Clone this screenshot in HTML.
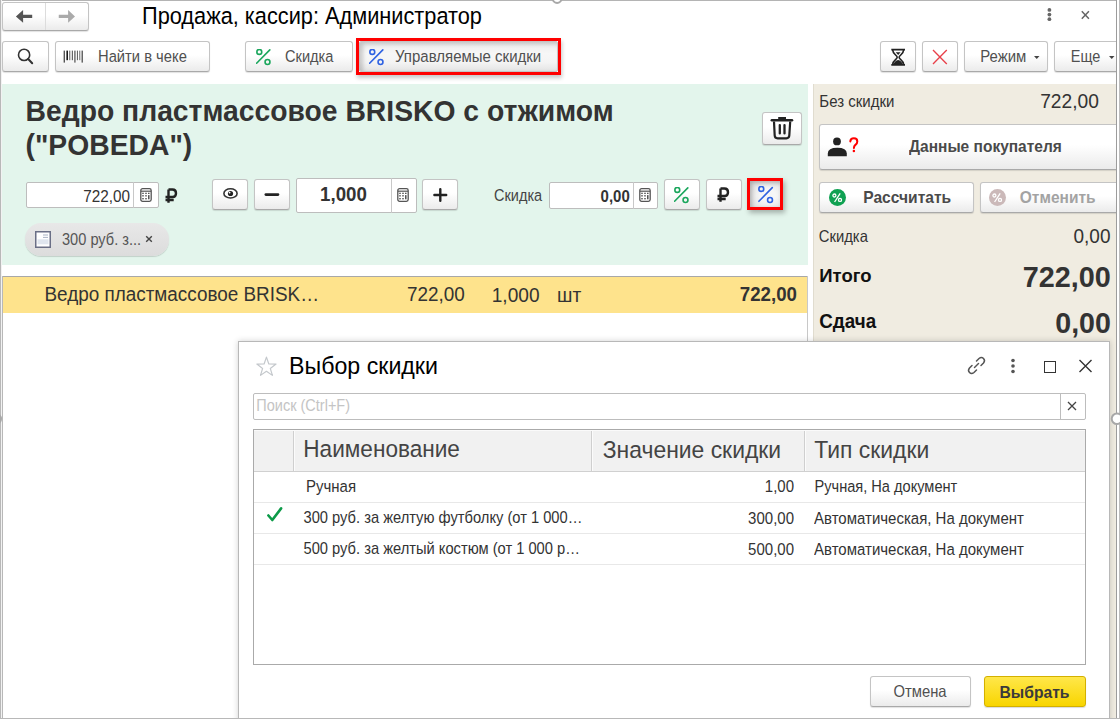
<!DOCTYPE html>
<html><head><meta charset="utf-8">
<style>
html,body{margin:0;padding:0;width:1120px;height:719px;overflow:hidden;background:#fff;position:relative;font-family:"Liberation Sans",sans-serif;}
.t{position:absolute;white-space:nowrap;}
</style></head><body>

<div style="position:absolute;left:0px;top:0px;width:1120px;height:1px;box-sizing:border-box;background:#b4b4b4;"></div>
<div style="position:absolute;left:0px;top:0px;width:1px;height:719px;box-sizing:border-box;background:#b8b8b8;"></div>
<div style="position:absolute;left:1px;top:0px;width:1px;height:719px;box-sizing:border-box;background:#f2f2f2;"></div>
<div style="position:absolute;left:1116px;top:0px;width:1px;height:719px;box-sizing:border-box;background:#9c9c9c;"></div>
<div style="position:absolute;left:1119px;top:0px;width:1px;height:719px;box-sizing:border-box;background:#bdbdbd;"></div>
<div style="position:absolute;left:0px;top:718px;width:1120px;height:1px;box-sizing:border-box;background:#b8b8b8;"></div>
<div style="position:absolute;left:2px;top:2px;width:87px;height:29px;box-sizing:border-box;border:1px solid #c4c4c4;border-bottom-color:#a9a9a9;border-radius:3px;background:linear-gradient(#ffffff 0%,#ffffff 45%,#ebebeb 100%);box-shadow:0 1px 1px rgba(0,0,0,0.12);"></div>
<div style="position:absolute;left:45px;top:3px;width:1px;height:27px;box-sizing:border-box;background:#dcdcdc;"></div>
<svg style="position:absolute;left:15px;top:9px" width="18" height="15" viewBox="0 0 18 15"><path d="M0.9 7.4 L8.1 1 V5.7 H17.2 V9.1 H8.1 V13.8 Z" fill="#555"/></svg>
<svg style="position:absolute;left:58px;top:9px" width="18" height="15" viewBox="0 0 18 15"><path d="M17 7.4 L10.1 1 V5.7 H0.75 V9.1 H10.1 V13.8 Z" fill="#aaa"/></svg>
<div class="t" style="left:142px;top:5.79px;font-size:21.75px;line-height:21.75px;font-weight:400;color:#000;transform:scaleY(1.08);transform-origin:0 18.41px;">Продажа, кассир: Администратор</div>
<svg style="position:absolute;left:1046px;top:7px" width="7" height="15" viewBox="0 0 7 15"><circle cx="3.4" cy="2.9" r="1.9" fill="#666"/><circle cx="3.4" cy="7.6" r="1.9" fill="#666"/><circle cx="3.4" cy="12.2" r="1.9" fill="#666"/></svg>
<svg style="position:absolute;left:1080px;top:10px" width="11" height="10" viewBox="0 0 11 10"><path d="M1.8 1.3 L8.9 8.7 M8.9 1.3 L1.8 8.7" stroke="#666" stroke-width="1.5"/></svg>
<div style="position:absolute;left:2px;top:41px;width:47px;height:31px;box-sizing:border-box;border:1px solid #c4c4c4;border-bottom-color:#a9a9a9;border-radius:3px;background:linear-gradient(#ffffff 0%,#ffffff 45%,#ebebeb 100%);box-shadow:0 1px 1px rgba(0,0,0,0.12);"></div>
<svg style="position:absolute;left:16px;top:48px" width="18" height="18" viewBox="0 0 18 18"><circle cx="8.1" cy="6.9" r="5.6" fill="none" stroke="#333" stroke-width="1.6"/><path d="M12.2 11 L16.2 15.3" stroke="#333" stroke-width="2" stroke-linecap="round"/></svg>
<div style="position:absolute;left:55px;top:41px;width:155px;height:31px;box-sizing:border-box;border:1px solid #c4c4c4;border-bottom-color:#a9a9a9;border-radius:3px;background:linear-gradient(#ffffff 0%,#ffffff 45%,#ebebeb 100%);box-shadow:0 1px 1px rgba(0,0,0,0.12);"></div>
<svg style="position:absolute;left:63px;top:50px" width="21" height="14" viewBox="0 0 21 14"><g><rect x="0.6" y="0.6" width="1.4" height="12" fill="#555"/><rect x="3.4" y="0.6" width="1.6" height="9.6" fill="#1a1a1a"/><rect x="6" y="0.6" width="1.4" height="9.6" fill="#888"/><rect x="8.8" y="0.6" width="1.1" height="9.6" fill="#555"/><rect x="11.2" y="0.6" width="1.4" height="12" fill="#666"/><rect x="13.9" y="0.6" width="1.1" height="9.6" fill="#666"/><rect x="16.2" y="0.6" width="1.1" height="9.6" fill="#777"/><rect x="18.5" y="0.6" width="1.5" height="12" fill="#666"/></g></svg>
<div class="t" style="left:98px;top:49.51px;font-size:14.75px;line-height:14.75px;font-weight:400;color:#505050;transform:scaleY(1.1);transform-origin:0 12.49px;">Найти в чеке</div>
<div style="position:absolute;left:245px;top:41px;width:108px;height:31px;box-sizing:border-box;border:1px solid #c4c4c4;border-bottom-color:#a9a9a9;border-radius:3px;background:linear-gradient(#ffffff 0%,#ffffff 45%,#ebebeb 100%);box-shadow:0 1px 1px rgba(0,0,0,0.12);"></div>
<svg style="position:absolute;left:256px;top:49px" width="16" height="17" viewBox="0 0 16 17"><circle cx="3.3" cy="2.9" r="2.45" fill="none" stroke="#1aa65c" stroke-width="1.6"/><circle cx="11.5" cy="13" r="2.45" fill="none" stroke="#1aa65c" stroke-width="1.6"/><path d="M0.6 14.2 L13.8 0.9" stroke="#1aa65c" stroke-width="1.6" stroke-linecap="round"/></svg>
<div class="t" style="left:285px;top:49.64px;font-size:14.6px;line-height:14.6px;font-weight:400;color:#505050;transform:scaleY(1.1);transform-origin:0 12.36px;">Скидка</div>
<div style="position:absolute;left:356px;top:38px;width:205px;height:37px;box-sizing:border-box;border:3px solid #ff0000;box-shadow:1px 3px 4px rgba(0,0,0,0.22);"></div>
<div style="position:absolute;left:359px;top:41px;width:199px;height:31px;box-sizing:border-box;border:1px solid #c4c4c4;border-radius:2px;background:linear-gradient(#ececec,#f7f7f7 40%,#f4f4f4 70%,#e4e4e4);box-shadow:inset 3px 2px 4px rgba(0,0,0,0.18);"></div>
<svg style="position:absolute;left:369px;top:49px" width="16" height="17" viewBox="0 0 16 17"><circle cx="3.3" cy="2.9" r="2.45" fill="none" stroke="#2e62e2" stroke-width="1.6"/><circle cx="11.5" cy="13" r="2.45" fill="none" stroke="#2e62e2" stroke-width="1.6"/><path d="M0.6 14.2 L13.8 0.9" stroke="#2e62e2" stroke-width="1.6" stroke-linecap="round"/></svg>
<div class="t" style="left:395px;top:49.30px;font-size:15px;line-height:15px;font-weight:400;color:#505050;transform:scaleY(1.1);transform-origin:0 12.70px;">Управляемые скидки</div>
<div style="position:absolute;left:880px;top:41px;width:36px;height:31px;box-sizing:border-box;border:1px solid #c4c4c4;border-bottom-color:#a9a9a9;border-radius:3px;background:linear-gradient(#ffffff 0%,#ffffff 45%,#ebebeb 100%);box-shadow:0 1px 1px rgba(0,0,0,0.12);"></div>
<svg style="position:absolute;left:890px;top:48px" width="16" height="19" viewBox="0 0 16 19"><path d="M1.3 1.6 H15 M1.3 16.8 H15" stroke="#222" stroke-width="1.8"/><path d="M2.7 2 C2.7 6 7.2 7.4 7.2 9.3 C7.2 11.2 2.7 12.5 2.7 16.3 M13.6 2 C13.6 6 9.1 7.4 9.1 9.3 C9.1 11.2 13.6 12.5 13.6 16.3" fill="none" stroke="#222" stroke-width="1.6"/><path d="M5.7 4.2 H10.6 L8.15 6.9 Z M3.4 16.2 Q4.8 12.6 8.15 11.9 Q11.5 12.6 12.9 16.2 Z" fill="#222"/></svg>
<div style="position:absolute;left:922px;top:41px;width:36px;height:31px;box-sizing:border-box;border:1px solid #c4c4c4;border-bottom-color:#a9a9a9;border-radius:3px;background:linear-gradient(#ffffff 0%,#ffffff 45%,#ebebeb 100%);box-shadow:0 1px 1px rgba(0,0,0,0.12);"></div>
<svg style="position:absolute;left:931px;top:49px" width="18" height="16" viewBox="0 0 18 16"><path d="M2 1.1 L15.8 15 M15.8 1.1 L2 15" stroke="#e8404a" stroke-width="1.35"/></svg>
<div style="position:absolute;left:964px;top:41px;width:84px;height:31px;box-sizing:border-box;border:1px solid #c4c4c4;border-bottom-color:#a9a9a9;border-radius:3px;background:linear-gradient(#ffffff 0%,#ffffff 45%,#ebebeb 100%);box-shadow:0 1px 1px rgba(0,0,0,0.12);"></div>
<div class="t" style="left:980.3px;top:50.34px;font-size:14.95px;line-height:14.95px;font-weight:400;color:#505050;transform:scaleY(1.1);transform-origin:0 12.66px;">Режим</div>
<svg style="position:absolute;left:1034px;top:56px" width="6" height="3" viewBox="0 0 6 3"><path d="M0 0 H5.5 L2.75 3 Z" fill="#444"/></svg>
<div style="position:absolute;left:1054px;top:41px;width:71px;height:31px;box-sizing:border-box;border:1px solid #c4c4c4;border-bottom-color:#a9a9a9;border-radius:3px;background:linear-gradient(#ffffff 0%,#ffffff 45%,#ebebeb 100%);box-shadow:0 1px 1px rgba(0,0,0,0.12);"></div>
<div class="t" style="left:1070.8px;top:50.23px;font-size:14.5px;line-height:14.5px;font-weight:400;color:#505050;transform:scaleY(1.1);transform-origin:0 12.27px;">Еще</div>
<svg style="position:absolute;left:1108.5px;top:56px" width="6" height="3" viewBox="0 0 6 3"><path d="M0 0 H5.5 L2.75 3 Z" fill="#444"/></svg>
<div style="position:absolute;left:1116px;top:0px;width:1px;height:719px;box-sizing:border-box;background:#9c9c9c;"></div>
<div style="position:absolute;left:1117px;top:0px;width:2px;height:719px;box-sizing:border-box;background:#fff;"></div>
<div style="position:absolute;left:1119px;top:0px;width:1px;height:719px;box-sizing:border-box;background:#bdbdbd;"></div>
<div style="position:absolute;left:2px;top:84px;width:806px;height:181px;box-sizing:border-box;background:#e3f5ec;"></div>
<div class="t" style="left:25.5px;top:97.44px;font-size:28.3px;line-height:28.3px;font-weight:700;color:#333;transform:scaleY(1.03);transform-origin:0 23.96px;">Ведро пластмассовое BRISKO с отжимом</div>
<div class="t" style="left:25.5px;top:130.84px;font-size:28.3px;line-height:28.3px;font-weight:700;color:#333;transform:scaleY(1.03);transform-origin:0 23.96px;">("POBEDA")</div>
<div style="position:absolute;left:762px;top:112px;width:40px;height:33px;box-sizing:border-box;border:1px solid #c4c4c4;border-bottom-color:#a9a9a9;border-radius:3px;background:linear-gradient(#ffffff 0%,#ffffff 45%,#ebebeb 100%);box-shadow:0 1px 1px rgba(0,0,0,0.12);"></div>
<svg style="position:absolute;left:770px;top:116px" width="24" height="25" viewBox="0 0 24 25"><path d="M1.8 4.35 H22" stroke="#222" stroke-width="2.5" stroke-linecap="round"/><rect x="8.2" y="1" width="7.8" height="3" fill="#222"/><path d="M4 5.5 L4.7 19.5 Q4.9 22.3 7.6 22.3 H16.4 Q19.1 22.3 19.3 19.5 L20.2 5.5" fill="none" stroke="#222" stroke-width="2.2"/><path d="M9.8 9.1 V17.4 M14.5 9.1 V17.4" stroke="#222" stroke-width="2.3" stroke-linecap="round"/></svg>
<div style="position:absolute;left:26px;top:182px;width:133px;height:26px;box-sizing:border-box;border:1px solid #bdbdbd;border-radius:2px;background:#fff;"></div>
<div style="position:absolute;left:133px;top:182px;width:1px;height:26px;box-sizing:border-box;background:#c8c8c8;"></div>
<div class="t" style="right:990px;top:188.55px;font-size:15.3px;line-height:15.3px;font-weight:400;color:#333;transform:scaleY(1.1);transform-origin:0 12.95px;">722,00</div>
<svg style="position:absolute;left:139.5px;top:188px" width="12" height="14" viewBox="0 0 12 14"><rect x="0.8" y="0.7" width="10.4" height="12.6" rx="1.8" fill="#fff" stroke="#555" stroke-width="1.3"/><path d="M1 3.2 H11" stroke="#555" stroke-width="1.2"/><g fill="#444"><rect x="2.3" y="4.7" width="1.4" height="1.3"/><rect x="5.3" y="4.7" width="1.4" height="1.3"/><rect x="8.1" y="4.7" width="1.4" height="1.3"/><rect x="2.3" y="7.1" width="1.4" height="1.4"/><rect x="5.3" y="7.1" width="1.4" height="1.4"/><rect x="8.1" y="7.1" width="1.4" height="4.2"/><rect x="2.3" y="10" width="1.4" height="1.4"/><rect x="5.3" y="10" width="1.4" height="1.4"/></g></svg>
<svg style="position:absolute;left:164px;top:188px" width="14" height="16" viewBox="0 0 14 16"><path d="M4.5 1.5 V14.8 M1.5 12 H9.7 M1.5 9 H8.5 Q12 9 12 5.2 Q12 1.5 8.5 1.5 H4.5" fill="none" stroke="#222" stroke-width="2.4"/></svg>
<div style="position:absolute;left:212px;top:179px;width:36px;height:31px;box-sizing:border-box;border:1px solid #c4c4c4;border-bottom-color:#a9a9a9;border-radius:3px;background:linear-gradient(#ffffff 0%,#ffffff 45%,#ebebeb 100%);box-shadow:0 1px 1px rgba(0,0,0,0.12);"></div>
<svg style="position:absolute;left:222px;top:187px" width="17" height="13" viewBox="0 0 17 13"><ellipse cx="8.5" cy="6.4" rx="6.6" ry="4.6" fill="none" stroke="#333" stroke-width="1.6"/><circle cx="8.5" cy="6.5" r="2.6" fill="#222"/><circle cx="7.6" cy="5.6" r="0.9" fill="#fff"/></svg>
<div style="position:absolute;left:254px;top:179px;width:36px;height:31px;box-sizing:border-box;border:1px solid #c4c4c4;border-bottom-color:#a9a9a9;border-radius:3px;background:linear-gradient(#ffffff 0%,#ffffff 45%,#ebebeb 100%);box-shadow:0 1px 1px rgba(0,0,0,0.12);"></div>
<svg style="position:absolute;left:262px;top:191px" width="20" height="7" viewBox="0 0 20 7"><path d="M3.8 3.6 H16" stroke="#222" stroke-width="2.6" stroke-linecap="round"/></svg>
<div style="position:absolute;left:296px;top:178px;width:121px;height:35px;box-sizing:border-box;border:1px solid #bdbdbd;border-radius:2px;background:#fff;"></div>
<div style="position:absolute;left:391px;top:178px;width:1px;height:35px;box-sizing:border-box;background:#c8c8c8;"></div>
<div class="t" style="left:-156.5px;width:1000px;text-align:center;top:185.77px;font-size:18.7px;line-height:18.7px;font-weight:700;color:#333;transform:scaleY(1.1);transform-origin:0 15.83px;">1,000</div>
<svg style="position:absolute;left:397px;top:188px" width="12" height="14" viewBox="0 0 12 14"><rect x="0.8" y="0.7" width="10.4" height="12.6" rx="1.8" fill="#fff" stroke="#555" stroke-width="1.3"/><path d="M1 3.2 H11" stroke="#555" stroke-width="1.2"/><g fill="#444"><rect x="2.3" y="4.7" width="1.4" height="1.3"/><rect x="5.3" y="4.7" width="1.4" height="1.3"/><rect x="8.1" y="4.7" width="1.4" height="1.3"/><rect x="2.3" y="7.1" width="1.4" height="1.4"/><rect x="5.3" y="7.1" width="1.4" height="1.4"/><rect x="8.1" y="7.1" width="1.4" height="4.2"/><rect x="2.3" y="10" width="1.4" height="1.4"/><rect x="5.3" y="10" width="1.4" height="1.4"/></g></svg>
<div style="position:absolute;left:422px;top:179px;width:36px;height:31px;box-sizing:border-box;border:1px solid #c4c4c4;border-bottom-color:#a9a9a9;border-radius:3px;background:linear-gradient(#ffffff 0%,#ffffff 45%,#ebebeb 100%);box-shadow:0 1px 1px rgba(0,0,0,0.12);"></div>
<svg style="position:absolute;left:431px;top:186px" width="18" height="18" viewBox="0 0 18 18"><path d="M3.4 9 H15.2 M9.3 3.2 V14.8" stroke="#222" stroke-width="2.4" stroke-linecap="round"/></svg>
<div class="t" style="left:494px;top:189.33px;font-size:14.5px;line-height:14.5px;font-weight:400;color:#444;transform:scaleY(1.1);transform-origin:0 12.27px;">Скидка</div>
<div style="position:absolute;left:549px;top:182px;width:109px;height:27px;box-sizing:border-box;border:1px solid #bdbdbd;border-radius:2px;background:#fff;"></div>
<div style="position:absolute;left:633px;top:182px;width:1px;height:27px;box-sizing:border-box;background:#c8c8c8;"></div>
<div class="t" style="right:490.20000000000005px;top:189.00px;font-size:15px;line-height:15px;font-weight:700;color:#333;transform:scaleY(1.1);transform-origin:0 12.70px;">0,00</div>
<svg style="position:absolute;left:639px;top:188px" width="12" height="14" viewBox="0 0 12 14"><rect x="0.8" y="0.7" width="10.4" height="12.6" rx="1.8" fill="#fff" stroke="#555" stroke-width="1.3"/><path d="M1 3.2 H11" stroke="#555" stroke-width="1.2"/><g fill="#444"><rect x="2.3" y="4.7" width="1.4" height="1.3"/><rect x="5.3" y="4.7" width="1.4" height="1.3"/><rect x="8.1" y="4.7" width="1.4" height="1.3"/><rect x="2.3" y="7.1" width="1.4" height="1.4"/><rect x="5.3" y="7.1" width="1.4" height="1.4"/><rect x="8.1" y="7.1" width="1.4" height="4.2"/><rect x="2.3" y="10" width="1.4" height="1.4"/><rect x="5.3" y="10" width="1.4" height="1.4"/></g></svg>
<div style="position:absolute;left:664px;top:179px;width:36px;height:31px;box-sizing:border-box;border:1px solid #c4c4c4;border-bottom-color:#a9a9a9;border-radius:3px;background:linear-gradient(#ffffff 0%,#ffffff 45%,#ebebeb 100%);box-shadow:0 1px 1px rgba(0,0,0,0.12);"></div>
<svg style="position:absolute;left:674px;top:187px" width="16" height="17" viewBox="0 0 16 17"><circle cx="3.3" cy="2.9" r="2.45" fill="none" stroke="#1aa65c" stroke-width="1.6"/><circle cx="11.5" cy="13" r="2.45" fill="none" stroke="#1aa65c" stroke-width="1.6"/><path d="M0.6 14.2 L13.8 0.9" stroke="#1aa65c" stroke-width="1.6" stroke-linecap="round"/></svg>
<div style="position:absolute;left:706px;top:179px;width:36px;height:31px;box-sizing:border-box;border:1px solid #c4c4c4;border-bottom-color:#a9a9a9;border-radius:3px;background:linear-gradient(#ffffff 0%,#ffffff 45%,#ebebeb 100%);box-shadow:0 1px 1px rgba(0,0,0,0.12);"></div>
<svg style="position:absolute;left:716px;top:187px" width="14" height="16" viewBox="0 0 14 16"><path d="M4.5 1.5 V14.8 M1.5 12 H9.7 M1.5 9 H8.5 Q12 9 12 5.2 Q12 1.5 8.5 1.5 H4.5" fill="none" stroke="#222" stroke-width="2.4"/></svg>
<div style="position:absolute;left:747px;top:178px;width:36px;height:32px;box-sizing:border-box;border:3px solid #ff0000;box-shadow:2px 3px 5px rgba(0,0,0,0.28);"></div>
<div style="position:absolute;left:750px;top:181px;width:30px;height:26px;box-sizing:border-box;background:radial-gradient(ellipse at 60% 55%,#f6f6f6 30%,#d8d8d8 100%);box-shadow:inset 2px 2px 4px rgba(0,0,0,0.22);"></div>
<svg style="position:absolute;left:758px;top:186px" width="16" height="18" viewBox="0 0 16 18"><circle cx="3.3" cy="2.9" r="2.45" fill="none" stroke="#2e62e2" stroke-width="1.6"/><circle cx="12" cy="14" r="2.45" fill="none" stroke="#2e62e2" stroke-width="1.6"/><path d="M0.9 15.3 L14.3 1.6" stroke="#2e62e2" stroke-width="1.6" stroke-linecap="round"/></svg>
<div style="position:absolute;left:25px;top:223px;width:144px;height:33px;box-sizing:border-box;border-radius:16px;background:linear-gradient(#e8e8e8,#dcdcdc);box-shadow:0 1px 1px rgba(0,0,0,0.15);"></div>
<svg style="position:absolute;left:35px;top:231px" width="16" height="17" viewBox="0 0 16 17"><rect x="0.75" y="0.75" width="14.5" height="15.5" fill="#fff" stroke="#6a6f86" stroke-width="1.5"/><rect x="2.5" y="8.3" width="11" height="5" fill="#dfe5ee"/><path d="M8 4 H13 M8 6.4 H13" stroke="#aab3c4" stroke-width="1"/></svg>
<div class="t" style="left:62px;top:232.84px;font-size:14.6px;line-height:14.6px;font-weight:400;color:#555;transform:scaleY(1.1);transform-origin:0 12.36px;">300 руб. з...</div>
<svg style="position:absolute;left:145px;top:235px" width="8" height="8" viewBox="0 0 8 8"><path d="M1.2 1.2 L6.8 6.8 M6.8 1.2 L1.2 6.8" stroke="#444" stroke-width="1.4"/></svg>
<div style="position:absolute;left:3px;top:276px;width:805px;height:37px;box-sizing:border-box;background:#fee38c;border-top:1px solid #a8a8a8;"></div>
<div style="position:absolute;left:807px;top:276px;width:1px;height:443px;box-sizing:border-box;background:#c8c8c8;"></div>
<div style="position:absolute;left:2px;top:276px;width:1px;height:443px;box-sizing:border-box;background:#b8b8b8;"></div>
<div class="t" style="left:44.5px;top:286.20px;font-size:18.9px;line-height:18.9px;font-weight:400;color:#333;transform:scaleY(1.1);transform-origin:0 16.00px;">Ведро пластмассовое BRISK…</div>
<div class="t" style="right:655.3px;top:286.20px;font-size:18.9px;line-height:18.9px;font-weight:400;color:#333;transform:scaleY(1.1);transform-origin:0 16.00px;">722,00</div>
<div class="t" style="right:580.5px;top:286.03px;font-size:19.1px;line-height:19.1px;font-weight:400;color:#333;transform:scaleY(1.1);transform-origin:0 16.17px;">1,000</div>
<div class="t" style="left:557px;top:285.95px;font-size:19.2px;line-height:19.2px;font-weight:400;color:#333;transform:scaleY(1.1);transform-origin:0 16.25px;">шт</div>
<div class="t" style="right:323px;top:286.37px;font-size:18.7px;line-height:18.7px;font-weight:700;color:#333;transform:scaleY(1.07);transform-origin:0 15.83px;">722,00</div>
<div style="position:absolute;left:813px;top:84px;width:303px;height:635px;box-sizing:border-box;background:#f0ece1;border-left:1px solid #e0dccf;"></div>
<div class="t" style="left:819.3px;top:94.00px;font-size:15px;line-height:15px;font-weight:400;color:#333;transform:scaleY(1.1);transform-origin:0 12.70px;">Без скидки</div>
<div class="t" style="right:21.200000000000045px;top:92.15px;font-size:19.2px;line-height:19.2px;font-weight:400;color:#333;transform:scaleY(1.1);transform-origin:0 16.25px;">722,00</div>
<div style="position:absolute;left:819px;top:124px;width:306px;height:46px;box-sizing:border-box;border:1px solid #c4c4c4;border-bottom-color:#a9a9a9;border-radius:3px;background:linear-gradient(#ffffff 0%,#ffffff 45%,#ebebeb 100%);box-shadow:0 1px 1px rgba(0,0,0,0.12);"></div>
<svg style="position:absolute;left:826px;top:136px" width="22" height="22" viewBox="0 0 22 22"><circle cx="11" cy="5.4" r="3.9" fill="#222"/><path d="M1.8 20.2 V17.5 Q1.8 11.8 11.3 11.8 Q20.8 11.8 20.8 17.5 V20.2 Z" fill="#222"/></svg>
<svg style="position:absolute;left:848px;top:137px" width="12" height="17" viewBox="0 0 12 17"><path d="M2.3 4.4 Q2.5 1.3 5.9 1.3 Q9.3 1.3 9.3 4.4 Q9.3 6.4 7.4 7.9 Q5.9 9.1 5.9 11" fill="none" stroke="#f00" stroke-width="2" stroke-linecap="round"/><circle cx="5.9" cy="14" r="1.25" fill="#f00"/></svg>
<div class="t" style="left:909px;top:139.48px;font-size:15.5px;line-height:15.5px;font-weight:700;color:#4a4a4a;transform:scaleY(1.07);transform-origin:0 13.12px;">Данные покупателя</div>
<div style="position:absolute;left:819px;top:182px;width:155px;height:31px;box-sizing:border-box;border:1px solid #c4c4c4;border-bottom-color:#a9a9a9;border-radius:3px;background:linear-gradient(#ffffff 0%,#ffffff 45%,#ebebeb 100%);box-shadow:0 1px 1px rgba(0,0,0,0.12);"></div>
<svg style="position:absolute;left:829px;top:189px" width="17" height="17" viewBox="0 0 17 17"><circle cx="8.5" cy="8.5" r="8.5" fill="#0fa152"/><g fill="none" stroke="#fff" stroke-width="1.3"><circle cx="5.4" cy="6.5" r="1.5"/><circle cx="11" cy="10.9" r="1.55"/><path d="M5.6 13 L11.2 4.4"/></g></svg>
<div class="t" style="left:863.2px;top:189.79px;font-size:15.6px;line-height:15.6px;font-weight:700;color:#4a4a4a;transform:scaleY(1.07);transform-origin:0 13.21px;">Рассчитать</div>
<div style="position:absolute;left:980px;top:182px;width:145px;height:31px;box-sizing:border-box;border:1px solid #c4c4c4;border-bottom-color:#a9a9a9;border-radius:3px;background:linear-gradient(#ffffff 0%,#ffffff 45%,#ebebeb 100%);box-shadow:0 1px 1px rgba(0,0,0,0.12);"></div>
<svg style="position:absolute;left:989px;top:189px" width="17" height="17" viewBox="0 0 17 17"><circle cx="8.5" cy="8.5" r="8.5" fill="#cbb9b9"/><g fill="none" stroke="#fff" stroke-width="1.3"><circle cx="5.4" cy="6.5" r="1.5"/><circle cx="11" cy="10.9" r="1.55"/><path d="M5.6 13 L11.2 4.4"/></g></svg>
<div class="t" style="left:1019.8px;top:189.88px;font-size:15.5px;line-height:15.5px;font-weight:700;color:#a3a3a3;transform:scaleY(1.07);transform-origin:0 13.12px;">Отменить</div>
<div style="position:absolute;left:1116px;top:0px;width:1px;height:719px;box-sizing:border-box;background:#9c9c9c;"></div>
<div style="position:absolute;left:1117px;top:0px;width:2px;height:719px;box-sizing:border-box;background:#fff;"></div>
<div style="position:absolute;left:1119px;top:0px;width:1px;height:719px;box-sizing:border-box;background:#bdbdbd;"></div>
<div class="t" style="left:818.8px;top:229.57px;font-size:14.8px;line-height:14.8px;font-weight:400;color:#333;transform:scaleY(1.1);transform-origin:0 12.53px;">Скидка</div>
<div class="t" style="right:9.5px;top:227.42px;font-size:19px;line-height:19px;font-weight:400;color:#333;transform:scaleY(1.1);transform-origin:0 16.08px;">0,00</div>
<div class="t" style="left:819.3px;top:266.94px;font-size:18.5px;line-height:18.5px;font-weight:700;color:#111;transform:scaleY(1.02);transform-origin:0 15.66px;">Итого</div>
<div class="t" style="right:9.200000000000045px;top:263.12px;font-size:28.8px;line-height:28.8px;font-weight:700;color:#333;transform:scaleY(1.04);transform-origin:0 24.38px;">722,00</div>
<div class="t" style="left:819.3px;top:313.09px;font-size:18.8px;line-height:18.8px;font-weight:700;color:#111;transform:scaleY(1.05);transform-origin:0 15.91px;">Сдача</div>
<div class="t" style="right:9.099999999999909px;top:309.39px;font-size:28.6px;line-height:28.6px;font-weight:700;color:#333;">0,00</div>
<div style="position:absolute;left:238px;top:341px;width:872px;height:384px;box-sizing:border-box;background:#fff;border:1px solid #b8b8b8;box-shadow:0 0 6px rgba(0,0,0,0.18);"></div>
<svg style="position:absolute;left:255px;top:356px" width="23" height="21" viewBox="0 0 23 21"><path d="M11.45 1.10 L13.82 7.93 L21.06 8.08 L15.29 12.45 L17.39 19.37 L11.45 15.24 L5.51 19.37 L7.61 12.45 L1.84 8.08 L9.08 7.93 Z" fill="none" stroke="#c4c8cc" stroke-width="1.2" stroke-linejoin="round"/></svg>
<div class="t" style="left:289px;top:354.96px;font-size:23.2px;line-height:23.2px;font-weight:400;color:#000;transform:scaleY(1.03);transform-origin:0 19.64px;">Выбор скидки</div>
<svg style="position:absolute;left:966px;top:355px" width="21" height="21" viewBox="0 0 21 21"><g fill="none" stroke="#555" stroke-width="1.5" stroke-linecap="round"><path d="M8.5 12.5 L12.5 8.5"/><path d="M10.5 6 L13 3.5 Q15.5 1.5 17.5 3.5 Q19.5 5.5 17.5 8 L15 10.5"/><path d="M6 10.5 L3.5 13 Q1.5 15.5 3.5 17.5 Q5.5 19.5 8 17.5 L10.5 15"/></g></svg>
<svg style="position:absolute;left:1010px;top:358px" width="6" height="16" viewBox="0 0 6 16"><circle cx="3" cy="2.5" r="1.8" fill="#555"/><circle cx="3" cy="8" r="1.8" fill="#555"/><circle cx="3" cy="13.5" r="1.8" fill="#555"/></svg>
<div style="position:absolute;left:1044px;top:361px;width:11.5px;height:11.5px;box-sizing:border-box;border:1.4px solid #333;"></div>
<svg style="position:absolute;left:1078px;top:359px" width="15" height="14" viewBox="0 0 15 14"><path d="M1.5 1 L13.5 13 M13.5 1 L1.5 13" stroke="#333" stroke-width="1.4"/></svg>
<div style="position:absolute;left:253px;top:393px;width:833px;height:27px;box-sizing:border-box;border:1px solid #bdbdbd;border-radius:2px;background:#fff;"></div>
<div style="position:absolute;left:1060px;top:393px;width:1px;height:27px;box-sizing:border-box;background:#bdbdbd;"></div>
<div class="t" style="left:256.3px;top:399.33px;font-size:14.5px;line-height:14.5px;font-weight:400;color:#c4c4c4;transform:scaleY(1.1);transform-origin:0 12.27px;">Поиск (Ctrl+F)</div>
<svg style="position:absolute;left:1067px;top:401px" width="10" height="10" viewBox="0 0 10 10"><path d="M1 1 L9 9 M9 1 L1 9" stroke="#444" stroke-width="1.3"/></svg>
<div style="position:absolute;left:253px;top:429px;width:833px;height:236px;box-sizing:border-box;border:1px solid #aaaaaa;background:#fff;"></div>
<div style="position:absolute;left:254px;top:430px;width:831px;height:42px;box-sizing:border-box;background:#f1f1f1;border-top:1px solid #fafafa;border-bottom:1px solid #d0d0d0;"></div>
<div style="position:absolute;left:293px;top:431px;width:1px;height:40px;box-sizing:border-box;background:#cfcfcf;"></div>
<div style="position:absolute;left:294px;top:431px;width:1px;height:40px;box-sizing:border-box;background:#fbfbfb;"></div>
<div style="position:absolute;left:591px;top:431px;width:1px;height:40px;box-sizing:border-box;background:#cfcfcf;"></div>
<div style="position:absolute;left:592px;top:431px;width:1px;height:40px;box-sizing:border-box;background:#fbfbfb;"></div>
<div style="position:absolute;left:804px;top:431px;width:1px;height:40px;box-sizing:border-box;background:#cfcfcf;"></div>
<div style="position:absolute;left:805px;top:431px;width:1px;height:40px;box-sizing:border-box;background:#fbfbfb;"></div>
<div class="t" style="left:303.3px;top:438.97px;font-size:22.6px;line-height:22.6px;font-weight:400;color:#444;transform:scaleY(1.05);transform-origin:0 19.13px;">Наименование</div>
<div class="t" style="left:602.8px;top:438.72px;font-size:22.9px;line-height:22.9px;font-weight:400;color:#444;transform:scaleY(1.05);transform-origin:0 19.38px;">Значение скидки</div>
<div class="t" style="left:814.3px;top:438.72px;font-size:22.9px;line-height:22.9px;font-weight:400;color:#444;transform:scaleY(1.05);transform-origin:0 19.38px;">Тип скидки</div>
<div style="position:absolute;left:254px;top:502px;width:831px;height:1px;box-sizing:border-box;background:#e8e8e8;"></div>
<div style="position:absolute;left:254px;top:533px;width:831px;height:1px;box-sizing:border-box;background:#e8e8e8;"></div>
<div style="position:absolute;left:254px;top:564px;width:831px;height:1px;box-sizing:border-box;background:#e8e8e8;"></div>
<div class="t" style="left:306px;top:479.30px;font-size:15px;line-height:15px;font-weight:400;color:#333;transform:scaleY(1.1);transform-origin:0 12.70px;">Ручная</div>
<div class="t" style="right:326px;top:479.30px;font-size:15px;line-height:15px;font-weight:400;color:#333;transform:scaleY(1.1);transform-origin:0 12.70px;">1,00</div>
<div class="t" style="left:814.5px;top:479.64px;font-size:14.6px;line-height:14.6px;font-weight:400;color:#333;transform:scaleY(1.1);transform-origin:0 12.36px;">Ручная, На документ</div>
<svg style="position:absolute;left:266px;top:507px" width="17" height="15" viewBox="0 0 17 15"><path d="M2.4 8.5 L6.3 13 L15.1 1.4" fill="none" stroke="#0c9a48" stroke-width="2.6" stroke-linecap="round" stroke-linejoin="round"/></svg>
<div class="t" style="left:303.5px;top:511.36px;font-size:14.7px;line-height:14.7px;font-weight:400;color:#333;transform:scaleY(1.1);transform-origin:0 12.44px;">300 руб. за желтую футболку (от 1 000…</div>
<div class="t" style="right:326px;top:511.10px;font-size:15px;line-height:15px;font-weight:400;color:#333;transform:scaleY(1.1);transform-origin:0 12.70px;">300,00</div>
<div class="t" style="left:814px;top:511.10px;font-size:15px;line-height:15px;font-weight:400;color:#333;transform:scaleY(1.1);transform-origin:0 12.70px;">Автоматическая, На документ</div>
<div class="t" style="left:303.5px;top:542.26px;font-size:14.7px;line-height:14.7px;font-weight:400;color:#333;transform:scaleY(1.1);transform-origin:0 12.44px;">500 руб. за желтый костюм (от 1 000 р…</div>
<div class="t" style="right:326px;top:542.00px;font-size:15px;line-height:15px;font-weight:400;color:#333;transform:scaleY(1.1);transform-origin:0 12.70px;">500,00</div>
<div class="t" style="left:814px;top:542.00px;font-size:15px;line-height:15px;font-weight:400;color:#333;transform:scaleY(1.1);transform-origin:0 12.70px;">Автоматическая, На документ</div>
<div style="position:absolute;left:870px;top:676px;width:101px;height:31px;box-sizing:border-box;border:1px solid #c4c4c4;border-bottom-color:#a9a9a9;border-radius:3px;background:linear-gradient(#ffffff 0%,#ffffff 45%,#ebebeb 100%);box-shadow:0 1px 1px rgba(0,0,0,0.12);"></div>
<div class="t" style="left:420px;width:1000px;text-align:center;top:685.47px;font-size:14.8px;line-height:14.8px;font-weight:400;color:#505050;transform:scaleY(1.1);transform-origin:0 12.53px;">Отмена</div>
<div style="position:absolute;left:984px;top:676px;width:102px;height:31px;box-sizing:border-box;border:1px solid #d3b000;border-radius:3px;background:linear-gradient(#ffe74a,#f8d500);box-shadow:0 1px 1px rgba(0,0,0,0.15);"></div>
<div class="t" style="left:534.5px;width:1000px;text-align:center;top:684.71px;font-size:15.7px;line-height:15.7px;font-weight:700;color:#3a3a3a;transform:scaleY(1.07);transform-origin:0 13.29px;">Выбрать</div>
<div style="position:absolute;left:0px;top:718px;width:1120px;height:1px;box-sizing:border-box;background:#b8b8b8;"></div>
<svg style="position:absolute;left:0;top:0" width="1120" height="719"><g fill="#fff" stroke="#a8a8a8" stroke-width="2"><circle cx="1117" cy="418.7" r="5.3"/><circle cx="557.1" cy="-1.5" r="4.4"/><circle cx="-4.3" cy="419" r="5.3"/></g></svg>
</body></html>
